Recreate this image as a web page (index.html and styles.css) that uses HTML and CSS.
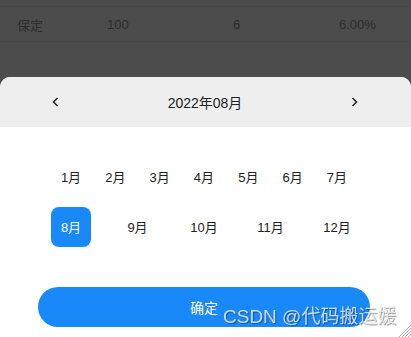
FILE: index.html
```html
<!DOCTYPE html>
<html lang="zh-CN">
<head>
  <meta charset="UTF-8">
  <meta name="viewport" content="width=device-width, initial-scale=1.0">
  <title>选择月份</title>
  <link rel="stylesheet" href="styles.css">
</head>
<body>
  <div class="table">
    <div class="table-row">
      <span class="cell cell-city">保定</span>
      <span class="cell cell-num">100</span>
      <span class="cell cell-count">6</span>
      <span class="cell cell-rate">6.00%</span>
    </div>
  </div>

  <div class="mask"></div>

  <div class="sheet">
    <div class="sheet-header">
      <button class="arrow-btn" aria-label="上一年">
        <svg width="10" height="10" viewBox="0 0 10 10"><polyline points="6.5,1 2.5,5 6.5,9" fill="none" stroke="#222" stroke-width="1.5"/></svg>
      </button>
      <span class="sheet-title">2022年08月</span>
      <button class="arrow-btn" aria-label="下一年">
        <svg width="10" height="10" viewBox="0 0 10 10"><polyline points="3.5,1 7.5,5 3.5,9" fill="none" stroke="#222" stroke-width="1.5"/></svg>
      </button>
    </div>

    <div class="months">
      <div class="month-row">
        <span class="month">1月</span>
        <span class="month">2月</span>
        <span class="month">3月</span>
        <span class="month">4月</span>
        <span class="month">5月</span>
        <span class="month">6月</span>
        <span class="month">7月</span>
      </div>
      <div class="month-row">
        <span class="month active">8月</span>
        <span class="month">9月</span>
        <span class="month">10月</span>
        <span class="month">11月</span>
        <span class="month">12月</span>
      </div>
    </div>

    <div class="footer">
      <button class="confirm-btn">确定</button>
    </div>
  </div>

  <div class="watermark">CSDN @代码搬运媛</div>
  <svg class="grip" width="12" height="12" viewBox="0 0 12 12">
    <line x1="0" y1="12" x2="12" y2="0" stroke="#aaa" stroke-width="1"/>
    <line x1="3" y1="12" x2="12" y2="3" stroke="#aaa" stroke-width="1"/>
    <line x1="6" y1="12" x2="12" y2="6" stroke="#aaa" stroke-width="1"/>
    <line x1="9" y1="12" x2="12" y2="9" stroke="#aaa" stroke-width="1"/>
  </svg>
</body>
</html>
```

FILE: styles.css
```css
body {
  margin: 0;
  font-family: 'Liberation Sans', Arial, 'Noto Sans CJK SC', sans-serif;
  background-color: #fff;
  height: 337px;
  overflow: hidden;
}

.table {
  padding-top: 6px;
}

.table-row {
  display: flex;
  align-items: center;
  height: 34px;
  border-top: 1px solid #eee;
  border-bottom: 1px solid #eee;
  font-size: 13px;
  color: #999;
}

.cell-city {
  margin-left: 17px;
  width: 90px;
}

.cell-num {
  width: 126px;
}

.cell-count {
  width: 106px;
}

.mask {
  position: fixed;
  inset: 0;
  background-color: rgba(0, 0, 0, 0.7);
}

.sheet {
  position: fixed;
  left: 0;
  right: 0;
  bottom: 0;
  height: 260px;
  background-color: #fff;
  border-radius: 10px 10px 0 0;
  overflow: hidden;
}

.sheet-header {
  display: flex;
  align-items: center;
  justify-content: space-between;
  height: 50px;
  padding: 0 51px 0 50px;
  background-color: #eee;
}

.arrow-btn {
  display: flex;
  align-items: center;
  justify-content: center;
  width: 12px;
  height: 12px;
  padding: 0;
  border: none;
  background: none;
  cursor: pointer;
}

.sheet-title {
  font-size: 14px;
  color: #222;
}

.months {
  display: flex;
  flex-direction: column;
  gap: 10px;
  padding: 30px 54px 0 51px;
}

.month-row {
  display: flex;
  justify-content: space-between;
}

.month {
  display: flex;
  align-items: center;
  justify-content: center;
  width: 40px;
  height: 38px;
  padding-bottom: 2px;
  font-size: 13px;
  color: #222;
  border-radius: 8px;
}

.month.active {
  background-color: #1989fa;
  color: #fff;
}

.footer {
  padding: 40px 41px 0 38px;
}

.confirm-btn {
  display: block;
  width: 100%;
  height: 40px;
  border: none;
  border-radius: 20px;
  background-color: #1989fa;
  color: #fff;
  font-family: inherit;
  font-size: 14px;
  cursor: pointer;
}

.watermark {
  position: fixed;
  left: 223px;
  top: 305px;
  font-size: 19px;
  line-height: 24px;
  color: rgba(235, 235, 235, 0.85);
  text-shadow: 1px 1px 1px rgba(0, 0, 0, 0.4);
  white-space: nowrap;
}

.grip {
  position: fixed;
  right: 0;
  bottom: 0;
}
```
